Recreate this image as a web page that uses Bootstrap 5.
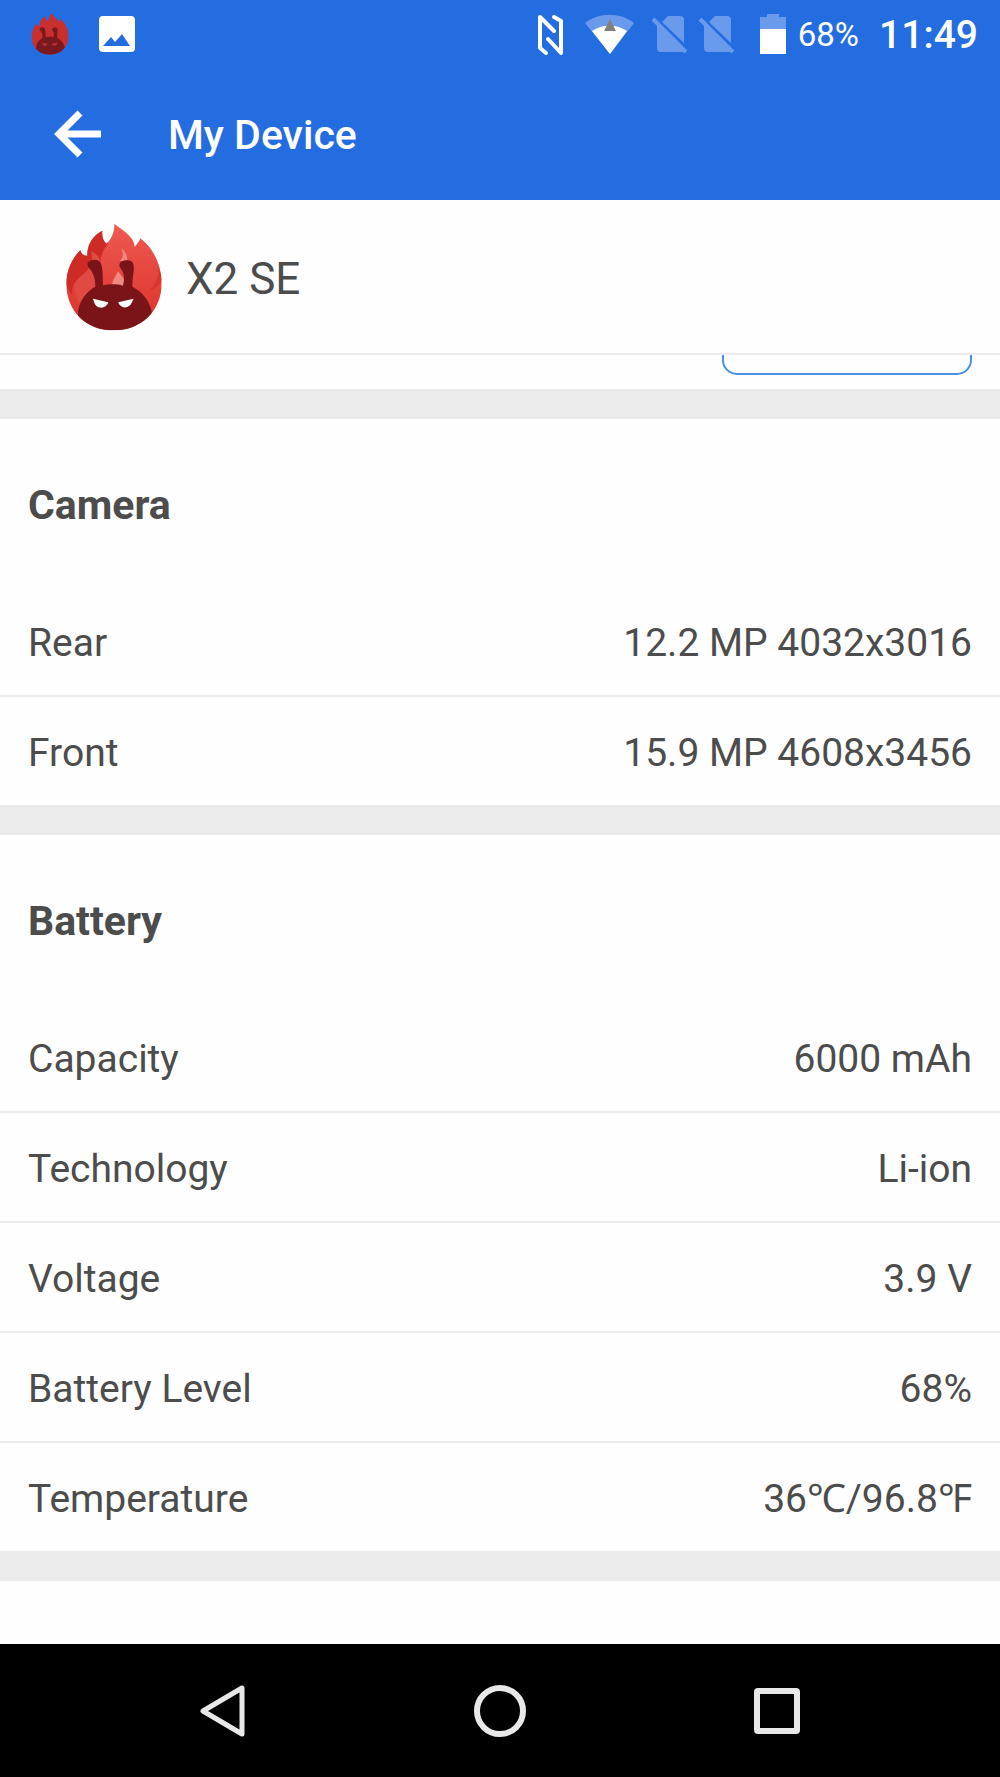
<!DOCTYPE html>
<html lang="en">
<head>
<meta charset="utf-8">
<meta name="viewport" content="width=device-width, initial-scale=1">
<title>My Device</title>
<link href="https://cdn.jsdelivr.net/npm/bootstrap@5.3.0/dist/css/bootstrap.min.css" rel="stylesheet">
<style>
  body { font-family: Roboto, "Noto Sans", sans-serif; color: #4c4c4c; background: #fefefe; font-size: 39px; line-height: 48px; }
  svg { display: block; flex: none; }
  .app-top { background: #246de1; color: #fff; }
  .status-bar { height: 68px; padding: 0 22px 0 31px; }
  .status-start { gap: 30px; }
  .status-level { font-size: 33px; margin-left: 12px; padding-top: 2px; }
  .status-time { font-weight: 500; margin-left: 20px; padding-top: 2px; }
  .tool-bar { height: 132px; padding: 0 54px; gap: 66px; }
  .tool-bar h1 { font-size: 41px; font-weight: 500; line-height: 48px; padding-top: 2px; }
  .device-head { height: 155px; padding: 0 66px; gap: 24px; border-bottom: 2px solid #ebebeb; }
  .device-name { font-size: 44px; padding-top: 4px; }
  .clip-strip { height: 34px; padding: 0 28px 14px; overflow: hidden; }
  .outline-btn { width: 250px; height: 80px; flex: none; border: 2px solid #4a90e2; border-radius: 15px; background: #fefefe; }
  .info-block { border-top: 30px solid #ebebeb; }
  .info-block h2 { height: 168px; padding: 6px 28px 0; font-size: 41px; font-weight: 700; }
  .info-row { height: 110px; padding: 4px 28px 0; border-bottom: 2px solid #ebebeb; }
  .info-row:last-child { height: 108px; border-bottom: 0; }
  .nav-keys { height: 133px; padding: 0 200px 0 199px; background: #000; }
</style>
<script src="https://cdn.jsdelivr.net/npm/bootstrap@5.3.0/dist/js/bootstrap.bundle.min.js"></script>
</head>
<body class="d-flex flex-column min-vh-100">

<svg width="0" height="0" class="position-absolute" aria-hidden="true">
  <defs>
    <linearGradient id="flame" x1="0" y1="0" x2="0" y2="1"><stop offset="0" stop-color="#ee5a51"/><stop offset="1" stop-color="#dc3029"/></linearGradient>
    <clipPath id="outline"><path d="M145 2C168 22 204 38 206 72C213 62 222 54 223 46C262 75 287 128 287 180C287 265 225 322 143 322C60 322 1 263 1 182C1 145 18 105 43 82C46 93 52 99 64 98C63 60 85 35 109 23C107 42 112 54 121 62C137 47 146 27 145 2Z"/></clipPath>
  </defs>
  <symbol id="logo" viewBox="0 0 288 324">
    <g clip-path="url(#outline)">
      <path fill="url(#flame)" d="M0 0H288V324H0Z"/>
      <path fill="#cf2b26" d="M0 60H64L60 0H125V62C108 85 102 105 105 130C95 100 86 92 74 84C88 112 70 140 42 162C22 178 16 195 20 218C10 205 0 190 0 182Z"/>
      <path fill="#e04a42" d="M76 84C104 101 105 110 108 150L92 200L40 240C25 210 20 185 45 160C74 140 90 115 76 84Z"/>
      <path fill="#ef8a83" d="M165 75C181 88 185 100 183 114H162C173 102 173 90 165 75ZM156 145C165 158 178 168 180 190H138C138 174 147 163 156 145Z"/>
      <path fill="#d8352f" d="M275 130C282 156 271 187 245 205C270 197 285 184 290 165Z"/>
      <path fill="#7a1418" d="M65 119C70 111 88 108 96 112C111 120 110 150 111 187C130 183 154 183 171 188C177 160 175 151 161 132C157 120 166 112 184 112C202 112 205 124 203 146C200 165 199 177 199 191C231 207 251 236 257 265V324H36V266C40 233 62 204 88 191C88 168 83 153 74 141C67 134 62 126 65 119Z"/>
      <path fill="#fff" d="M81 227L127 238C121 258 91 261 84 236ZM157 238L203 227L198 237C190 260 162 257 157 238Z"/>
    </g>
  </symbol>
  <symbol id="logo-small" viewBox="0 0 288 324">
    <g clip-path="url(#outline)">
      <path fill="#c92f2c" d="M0 0H288V324H0Z"/>
      <path fill="#7a1820" d="M65 119C70 111 88 108 96 112C111 120 110 150 111 187C130 183 154 183 171 188C177 160 175 151 161 132C157 120 166 112 184 112C202 112 205 124 203 146C200 165 199 177 199 191C231 207 251 236 257 265V324H36V266C40 233 62 204 88 191C88 168 83 153 74 141C67 134 62 126 65 119Z"/>
      <path fill="#b8302f" d="M81 227L127 238C121 258 91 261 84 236ZM157 238L203 227L198 237C190 260 162 257 157 238Z"/>
    </g>
  </symbol>
  <symbol id="no-sim" viewBox="0 0 36 44">
    <path fill="#6a9aeb" d="M11 10L17 4H29Q33 4 33 8V31ZM6 11L33 40H10Q6 40 6 36Z"/>
    <path d="M2 7L35 40" stroke="#6a9aeb" stroke-width="4"/>
  </symbol>
</svg>

<header class="app-top">
  <div class="status-bar d-flex align-items-center justify-content-between">
    <div class="status-start d-flex align-items-center">
      <svg width="38" height="42" aria-hidden="true"><use href="#logo-small"/></svg>
      <svg width="36" height="36" viewBox="0 0 36 36" aria-hidden="true"><rect width="36" height="36" rx="4" fill="#fff"/><path fill="#246de1" d="M4 30L12 21L16 26L23 18L31 30Z"/></svg>
    </div>
    <div class="d-flex align-items-center">
      <svg width="198" height="44" viewBox="0 0 198 44" class="me-4" aria-hidden="true">
        <g fill="none" stroke="#fff" stroke-width="4" stroke-linecap="round" stroke-linejoin="round">
          <path d="M16 19L2 5V36L8 41M10 27L23 41V9L16 5"/>
        </g>
        <path fill="#6a9aeb" d="M47 11C61 0 82 0 96 11L72 42Z"/>
        <path fill="#fff" d="M54 19C64 12 79 12 89 19L72 42Z"/>
        <path fill="#808080" d="M72 7L78 19H66Z"/>
        <use href="#no-sim" x="113" width="36" height="44"/>
        <use href="#no-sim" x="160" width="36" height="44"/>
      </svg>
      <svg width="26" height="42" viewBox="0 0 26 42" aria-hidden="true"><path fill="#6a9aeb" d="M7 1H19V4H26V16H0V4H7Z"/><path fill="#fff" d="M0 16H26V41H0Z"/></svg>
      <span class="status-level">68%</span>
      <span class="status-time">11:49</span>
    </div>
  </div>
  <div class="tool-bar d-flex align-items-center">
    <a href="#" aria-label="Back"><svg width="48" height="48" viewBox="0 0 48 48"><path d="M26 3L5 24L26 45M5 24H47" fill="none" stroke="#fff" stroke-width="7"/></svg></a>
    <h1 class="m-0">My Device</h1>
  </div>
</header>

<main class="flex-grow-1">
  <div class="device-head d-flex align-items-center">
    <svg width="96" height="108" role="img" aria-label="Device logo"><use href="#logo"/></svg>
    <span class="device-name">X2 SE</span>
  </div>
  <div class="clip-strip d-flex justify-content-end align-items-end">
    <button type="button" class="outline-btn" aria-label="Details"></button>
  </div>

  <section class="info-block">
    <h2 class="m-0 d-flex align-items-center">Camera</h2>
    <div class="info-row d-flex align-items-center justify-content-between"><span>Rear</span><span>12.2 MP 4032x3016</span></div>
    <div class="info-row d-flex align-items-center justify-content-between"><span>Front</span><span>15.9 MP 4608x3456</span></div>
  </section>

  <section class="info-block">
    <h2 class="m-0 d-flex align-items-center">Battery</h2>
    <div class="info-row d-flex align-items-center justify-content-between"><span>Capacity</span><span>6000 mAh</span></div>
    <div class="info-row d-flex align-items-center justify-content-between"><span>Technology</span><span>Li-ion</span></div>
    <div class="info-row d-flex align-items-center justify-content-between"><span>Voltage</span><span>3.9 V</span></div>
    <div class="info-row d-flex align-items-center justify-content-between"><span>Battery Level</span><span>68%</span></div>
    <div class="info-row d-flex align-items-center justify-content-between"><span>Temperature</span><span>36℃/96.8℉</span></div>
  </section>
  <div class="info-block"></div>
</main>

<nav class="nav-keys d-flex align-items-center justify-content-between" aria-label="System navigation">
  <a href="#" aria-label="Back"><svg width="47" height="54" viewBox="0 0 47 54"><path d="M43 4V50L4 27Z" fill="none" stroke="#e8e8e8" stroke-width="5" stroke-linejoin="round"/></svg></a>
  <a href="#" aria-label="Home"><svg width="52" height="52" viewBox="0 0 52 52"><circle cx="26" cy="26" r="23" fill="none" stroke="#e8e8e8" stroke-width="6"/></svg></a>
  <a href="#" aria-label="Recent apps"><svg width="46" height="46" viewBox="0 0 46 46"><rect x="3" y="3" width="40" height="40" rx="1" fill="none" stroke="#e8e8e8" stroke-width="6" stroke-linejoin="round"/></svg></a>
</nav>
</body>
</html>
